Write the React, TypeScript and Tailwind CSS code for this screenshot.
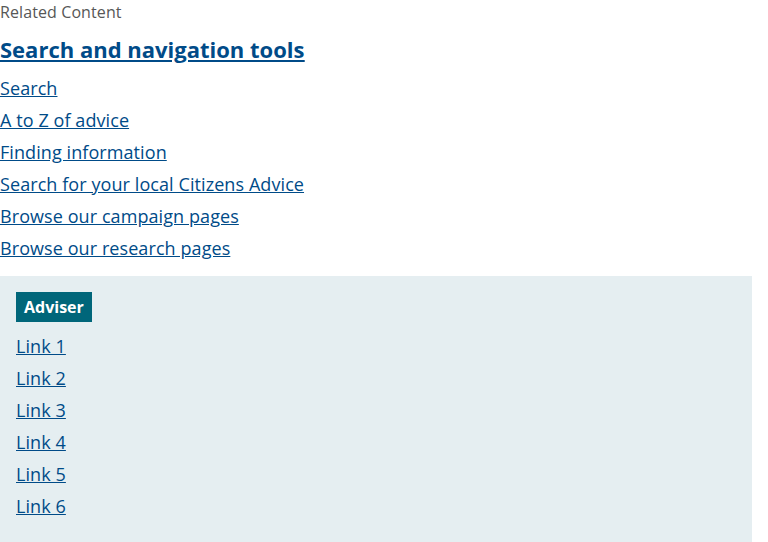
import React from 'react';

const mainLinks = [
  'Search',
  'A to Z of advice',
  'Finding information',
  'Search for your local Citizens Advice',
  'Browse our campaign pages',
  'Browse our research pages',
];

const adviserLinks = ['Link 1', 'Link 2', 'Link 3', 'Link 4', 'Link 5', 'Link 6'];

export default function App() {
  return (
    <div className="w-[768px] h-[542px] overflow-hidden bg-white font-['Open_Sans',sans-serif]">
      <div className="text-[16px] leading-[24px] tracking-[0.1px] text-[#575757]">Related Content</div>
      <h2 className="mt-[7px] text-[22px] leading-[36px] font-bold text-[#004b88] underline">
        <a href="#">Search and navigation tools</a>
      </h2>
      <ul className="mt-[5px]">
        {mainLinks.map((l) => (
          <li key={l} className="text-[18px] leading-[32px] tracking-[0.08px]">
            <a href="#" className="text-[#004b88] underline">{l}</a>
          </li>
        ))}
      </ul>
      <div className="mt-3 w-[752px] bg-[#e5eef1] px-4 pt-4 pb-6">
        <span className="inline-block bg-[#00667a] px-2 text-[16px] leading-[30px] font-bold text-white">Adviser</span>
        <ul className="mt-2">
          {adviserLinks.map((l) => (
            <li key={l} className="text-[18px] leading-[32px] tracking-[0.08px]">
              <a href="#" className="text-[#004b88] underline">{l}</a>
            </li>
          ))}
        </ul>
      </div>
    </div>
  );
}
